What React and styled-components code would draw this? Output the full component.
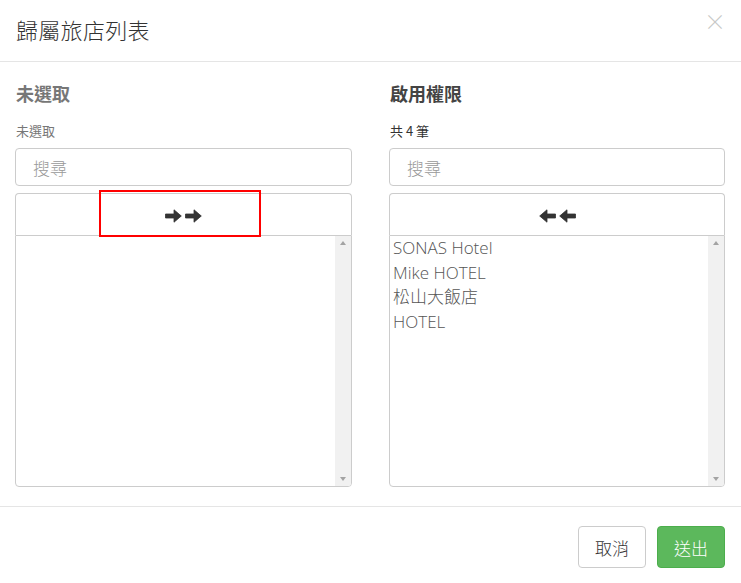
import React from 'react'
import styled, { createGlobalStyle } from 'styled-components'

const GlobalStyle = createGlobalStyle`
    html, body {
        margin: 0;
        padding: 0;
        background: #fff;
    }
    body {
        font-family: "Noto Sans CJK TC", "Liberation Sans", sans-serif;
        color: #333;
    }
    * {
        box-sizing: border-box;
    }
`

const Modal = styled.div`
    width: 741px;
    height: 583px;
    display: flex;
    flex-direction: column;
    background: #fff;
`

const Header = styled.div`
    height: 62px;
    border-bottom: 1px solid #e5e5e5;
    display: flex;
    align-items: center;
    justify-content: space-between;
    padding: 0 15px 4px 16px;
`

const Title = styled.h4`
    margin: 0;
    font-size: 22px;
    font-weight: 300;
    color: #333;
    letter-spacing: 0.3px;
`

const Close = styled.span`
    font-size: 22px;
    font-weight: 300;
    color: #c8c8c8;
    line-height: 1;
    margin-top: -18px;
`

const Body = styled.div`
    flex: 1;
    display: grid;
    grid-template-columns: 337px 336px;
    column-gap: 37px;
    padding: 14px 16px 0 15px;
    border-bottom: 1px solid #e5e5e5;
`

const Column = styled.div`
    display: flex;
    flex-direction: column;
`

const ColumnTitle = styled.h3`
    margin: 0 0 0 1px;
    height: 34px;
    font-size: 18px;
    font-weight: 700;
    color: ${p => (p.$muted ? '#777' : '#444')};
    line-height: 34px;
`

const Info = styled.div`
    margin: 9px 0 0 1px;
    height: 29px;
    font-size: 13px;
    line-height: 24px;
    color: ${p => (p.$muted ? '#777' : '#333')};
`

const Search = styled.input`
    height: 38px;
    width: 100%;
    border: 1px solid #ccc;
    border-radius: 4px;
    padding: 0 17px;
    font-family: inherit;
    font-size: 17px;
    font-weight: 300;
    outline: none;
    &::placeholder {
        color: #999;
    }
`

const MoveButton = styled.div`
    position: relative;
    margin-top: 7px;
    height: 42px;
    border: 1px solid #ccc;
    border-bottom: none;
    border-radius: 4px 4px 0 0;
    display: flex;
    align-items: center;
    justify-content: center;
    gap: 3px;
    padding-top: 2px;
`

const Highlight = styled.div`
    position: absolute;
    left: 83px;
    top: -4px;
    width: 162px;
    height: 47px;
    border: 2px solid #f00;
`

const ListBox = styled.div`
    height: 252px;
    border: 1px solid #ccc;
    border-radius: 0 0 4px 4px;
    display: flex;
    overflow: hidden;
`

const Options = styled.div`
    flex: 1;
    padding: 0 3px;
    display: flex;
    flex-direction: column;
`

const Option = styled.div`
    font-family: "Open Sans", "Noto Sans CJK TC", sans-serif;
    font-size: 17px;
    font-weight: 300;
    line-height: 24.5px;
    color: #555;
    white-space: nowrap;
`

const Scrollbar = styled.div`
    width: 16px;
    background: #f1f1f1;
    display: flex;
    flex-direction: column;
    justify-content: space-between;
    align-items: center;
    padding: 5px 0;
`

const ScrollArrow = styled.span`
    width: 0;
    height: 0;
    border-left: 3.5px solid transparent;
    border-right: 3.5px solid transparent;
    ${p => (p.$down
        ? 'border-top: 4px solid #a3a3a3;'
        : 'border-bottom: 4px solid #a3a3a3;')}
`

const Footer = styled.div`
    height: 76px;
    display: flex;
    justify-content: flex-end;
    align-items: flex-start;
    gap: 11px;
    padding: 19px 16px 0 0;
`

const Button = styled.button`
    height: 42px;
    padding: 0 16px;
    border-radius: 4px;
    border: 1px solid ${p => (p.$primary ? '#4cae4c' : '#ccc')};
    background: ${p => (p.$primary ? '#5cb85c' : '#fff')};
    color: ${p => (p.$primary ? '#fff' : '#333')};
    font-family: inherit;
    font-size: 17px;
    font-weight: 300;
`

function Arrow({ left }) {
    return (
        <svg width="17" height="14" viewBox="0 0 17 14">
            <polygon
                points="0.5,5 9,5 9,0.8 16.3,7 9,13.2 9,9 0.5,9"
                fill="#333"
                stroke="#333"
                strokeWidth="0.8"
                strokeLinejoin="round"
                transform={left ? 'translate(17 0) scale(-1 1)' : undefined}
            />
        </svg>
    )
}

function DualList({ title, info, muted, items, direction, highlighted }) {
    return (
        <Column>
            <ColumnTitle $muted={muted}>{title}</ColumnTitle>
            <Info $muted={muted}>{info}</Info>
            <Search placeholder={'搜尋'} />
            <MoveButton>
                <Arrow left={direction === 'left'} />
                <Arrow left={direction === 'left'} />
                {highlighted && <Highlight />}
            </MoveButton>
            <ListBox>
                <Options>
                    {items.map(item => (
                        <Option key={item}>{item}</Option>
                    ))}
                </Options>
                <Scrollbar>
                    <ScrollArrow />
                    <ScrollArrow $down />
                </Scrollbar>
            </ListBox>
        </Column>
    )
}

export default function App() {
    return (
        <Modal>
            <GlobalStyle />
            <Header>
                <Title>{'歸屬旅店列表'}</Title>
                <Close>{'×'}</Close>
            </Header>
            <Body>
                <DualList
                    title={'未選取'}
                    info={'未選取'}
                    muted
                    items={[]}
                    direction={'right'}
                    highlighted
                />
                <DualList
                    title={'啟用權限'}
                    info={'共 4 筆'}
                    items={['SONAS Hotel', 'Mike HOTEL', '松山大飯店', 'HOTEL']}
                    direction={'left'}
                />
            </Body>
            <Footer>
                <Button>{'取消'}</Button>
                <Button $primary>{'送出'}</Button>
            </Footer>
        </Modal>
    )
}
